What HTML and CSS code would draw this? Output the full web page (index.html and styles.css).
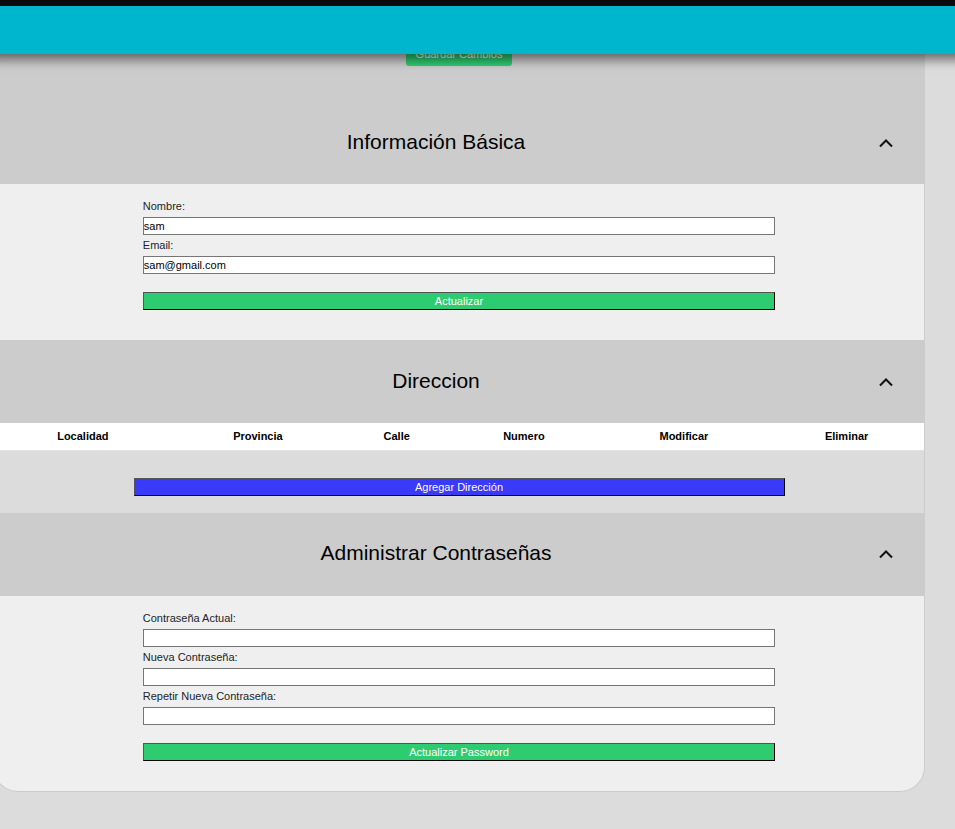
FILE: index.html
```html
<!DOCTYPE html>
<html lang="es">
<head>
<meta charset="utf-8">
<title>Perfil</title>
<link rel="stylesheet" href="styles.css">
</head>
<body>
<header class="topbar"></header>
<main class="card">
  <div class="profile-actions">
    <button class="save" type="button">Guardar Cambios</button>
  </div>

  <section>
    <h2 class="section-heading">
      <button class="toggle" type="button" aria-expanded="true">
        <span class="toggle-text">Información Básica</span>
        <svg class="chevron" viewBox="0 0 24 24" aria-hidden="true"><path d="M6 15.5 12 9.5 18 15.5"/></svg>
      </button>
    </h2>
    <form class="panel">
      <label for="nombre">Nombre:</label>
      <input id="nombre" type="text" value="sam">
      <label for="email">Email:</label>
      <input id="email" type="email" value="sam@gmail.com">
      <button class="action" type="button">Actualizar</button>
    </form>
  </section>

  <section>
    <h2 class="section-heading">
      <button class="toggle" type="button" aria-expanded="true">
        <span class="toggle-text">Direccion</span>
        <svg class="chevron" viewBox="0 0 24 24" aria-hidden="true"><path d="M6 15.5 12 9.5 18 15.5"/></svg>
      </button>
    </h2>
    <table class="addresses">
      <thead>
        <tr><th>Localidad</th><th>Provincia</th><th>Calle</th><th>Numero</th><th>Modificar</th><th>Eliminar</th></tr>
      </thead>
    </table>
    <div class="address-actions">
      <button class="action action-add" type="button">Agregar Dirección</button>
    </div>
  </section>

  <section>
    <h2 class="section-heading">
      <button class="toggle" type="button" aria-expanded="true">
        <span class="toggle-text">Administrar Contraseñas</span>
        <svg class="chevron" viewBox="0 0 24 24" aria-hidden="true"><path d="M6 15.5 12 9.5 18 15.5"/></svg>
      </button>
    </h2>
    <form class="panel">
      <label for="actual">Contraseña Actual:</label>
      <input id="actual" type="password">
      <label for="nueva">Nueva Contraseña:</label>
      <input id="nueva" type="password">
      <label for="repetir">Repetir Nueva Contraseña:</label>
      <input id="repetir" type="password">
      <button class="action" type="button">Actualizar Password</button>
    </form>
  </section>
</main>
</body>
</html>
```
FILE: styles.css
```css
* {
  box-sizing: border-box;
}

body {
  margin: 0;
  background: #dcdcdc;
  color: #212529;
  font-family: "Liberation Sans", Arial, sans-serif;
  font-size: 11px;
  overflow-x: hidden;
}

button,
input {
  font: inherit;
}

.topbar {
  position: fixed;
  top: 0;
  left: 0;
  right: 0;
  z-index: 10;
  height: 54px;
  border-top: 6px solid #0a0a0a;
  background: #00b6cf;
  box-shadow: 0 -4px 10px 10px rgba(0, 0, 0, 0.5);
}

.card {
  margin: 0 30px 32px -7px;
  border: 1px solid #ccc;
  border-top: 0;
  border-radius: 0 0 25px 25px;
  background: #efefef;
  overflow: hidden;
}

.profile-actions {
  display: flex;
  justify-content: center;
  padding: 42px 0 35px;
  background: #ccc;
}

.save {
  height: 24px;
  padding: 0 10px;
  border: 0;
  border-radius: 3px;
  background: #2ecc71;
  color: #fff;
}

.section-heading {
  margin: 0;
  font-size: 21px;
  font-weight: 400;
}

.toggle {
  display: flex;
  align-items: center;
  width: 100%;
  height: 83px;
  padding: 0 26px 0 4px;
  border: 0;
  background: #ccc;
  color: #000;
}

.toggle-text {
  flex: 1;
  padding-bottom: 2px;
  text-align: center;
}

.chevron {
  width: 24px;
  height: 24px;
  fill: none;
  stroke: #111;
  stroke-width: 2;
}

.panel {
  display: flex;
  flex-direction: column;
  width: 68%;
  margin: 0 auto;
  padding: 12px 0 30px;
}

.panel label {
  line-height: 21px;
}

.panel input {
  height: 18px;
  padding: 0;
  border: 1px solid #767676;
  border-radius: 0;
  background: #fff;
  color: #000;
}

.action {
  height: 18px;
  margin-top: 18px;
  padding: 0;
  border: 1px solid;
  border-color: #555 #000 #000 #555;
  background: #2ecc71;
  color: #fff;
}

.addresses {
  width: 100%;
  border-collapse: collapse;
  background: #fff;
}

.addresses th {
  height: 27px;
  padding: 0 5px;
  border-bottom: 1px solid #dee2e6;
  color: #000;
  text-align: center;
}

.address-actions {
  display: flex;
  justify-content: center;
  padding: 27px 0 17px;
  background: #dcdcdc;
}

.action-add {
  width: 70%;
  margin-top: 0;
  background: #3a3afa;
}
```
